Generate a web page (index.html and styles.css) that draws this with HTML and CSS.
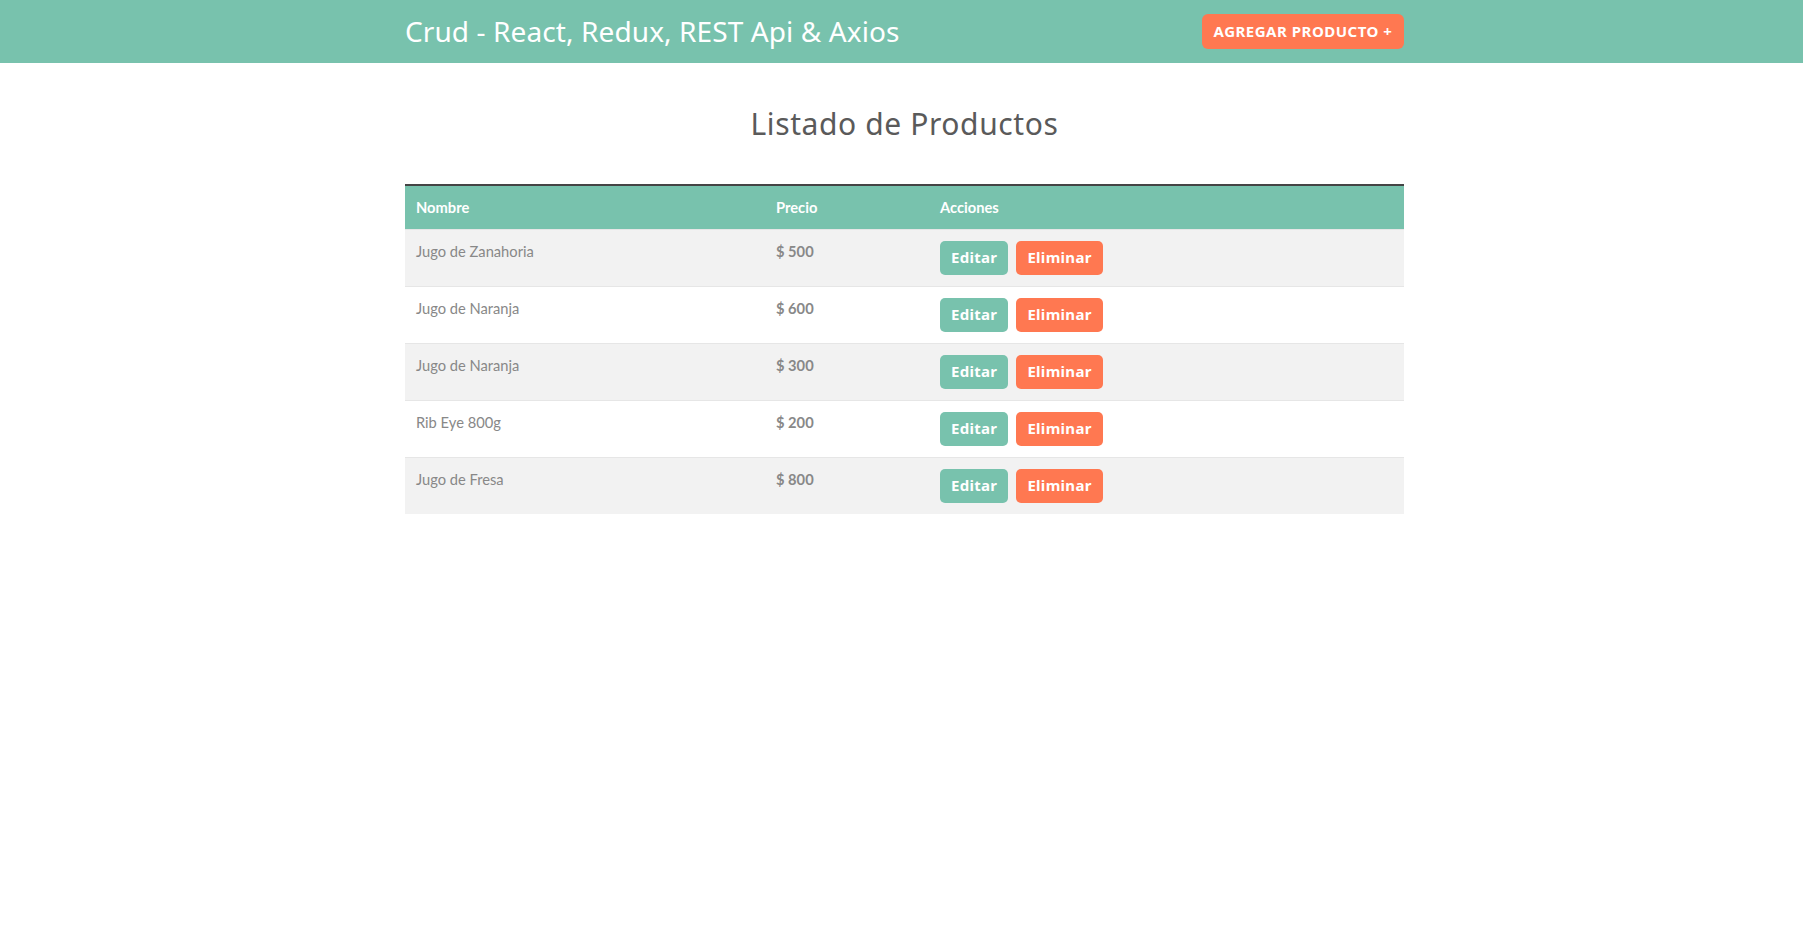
FILE: index.html
```html
<!DOCTYPE html>
<html lang="es">
<head>
<meta charset="utf-8">
<title>Crud - React, Redux, REST Api &amp; Axios</title>
<link rel="stylesheet" href="styles.css">
</head>
<body>
<header class="navbar">
  <div class="container navbar-inner">
    <h1 class="brand">Crud - React, Redux, REST Api &amp; Axios</h1>
    <a class="btn btn-danger btn-add" href="#">Agregar Producto +</a>
  </div>
</header>
<main class="container">
  <h2 class="page-title">Listado de Productos</h2>
  <table class="table">
    <colgroup>
      <col class="col-name">
      <col class="col-price">
      <col class="col-actions">
    </colgroup>
    <thead>
      <tr>
        <th>Nombre</th>
        <th>Precio</th>
        <th>Acciones</th>
      </tr>
    </thead>
    <tbody>
      <tr>
        <td>Jugo de Zanahoria</td>
        <td class="price">$ 500</td>
        <td><div class="actions"><a class="btn btn-primary" href="#">Editar</a><button class="btn btn-danger" type="button">Eliminar</button></div></td>
      </tr>
      <tr>
        <td>Jugo de Naranja</td>
        <td class="price">$ 600</td>
        <td><div class="actions"><a class="btn btn-primary" href="#">Editar</a><button class="btn btn-danger" type="button">Eliminar</button></div></td>
      </tr>
      <tr>
        <td>Jugo de Naranja</td>
        <td class="price">$ 300</td>
        <td><div class="actions"><a class="btn btn-primary" href="#">Editar</a><button class="btn btn-danger" type="button">Eliminar</button></div></td>
      </tr>
      <tr>
        <td>Rib Eye 800g</td>
        <td class="price">$ 200</td>
        <td><div class="actions"><a class="btn btn-primary" href="#">Editar</a><button class="btn btn-danger" type="button">Eliminar</button></div></td>
      </tr>
      <tr>
        <td>Jugo de Fresa</td>
        <td class="price">$ 800</td>
        <td><div class="actions"><a class="btn btn-primary" href="#">Editar</a><button class="btn btn-danger" type="button">Eliminar</button></div></td>
      </tr>
    </tbody>
  </table>
</main>
</body>
</html>
```

FILE: styles.css
```css
* { box-sizing: border-box; }

body {
  margin: 0;
  font-family: "Lato", "Open Sans", sans-serif;
  font-size: 14.7px;
  color: #888;
  background: #fff;
}

.container {
  width: 1005px;
  margin: 0 auto;
  padding-left: 6px;
}

.navbar {
  background: #78c2ad;
  height: 63px;
}

.navbar-inner {
  height: 63px;
  display: flex;
  align-items: center;
  justify-content: space-between;
}

.brand {
  margin: 0;
  font-family: "Noto Sans", sans-serif;
  font-weight: 400;
  font-size: 28px;
  letter-spacing: 0.1px;
  color: #fff;
  line-height: 1;
  padding-bottom: 2px;
}

.btn {
  display: inline-flex;
  align-items: center;
  justify-content: center;
  height: 34px;
  padding: 0 11px 2px;
  border: 0;
  border-radius: 5px;
  font-family: "Noto Sans", sans-serif;
  font-weight: 700;
  font-size: 15px;
  letter-spacing: 0.3px;
  color: #fff;
  text-decoration: none;
  cursor: pointer;
}

.btn-primary { background: #78c2ad; }
.btn-danger { background: #ff7851; }

.btn-add {
  height: 35px;
  width: 202px;
  padding: 0 0 1px;
  text-transform: uppercase;
  font-size: 15px;
  letter-spacing: 0.5px;
  border-radius: 6px;
}

.page-title {
  margin: 0;
  height: 121px;
  padding-top: 42px;
  text-align: center;
  font-family: "Noto Sans", sans-serif;
  font-weight: 400;
  font-size: 30px;
  letter-spacing: 0.6px;
  line-height: 38px;
  color: #5a5a5a;
}

.table {
  width: 999px;
  border-collapse: collapse;
  table-layout: fixed;
}

.col-name { width: 360px; }
.col-price { width: 164px; }

.table th {
  background: #78c2ad;
  color: #fff;
  font-weight: 700;
  font-size: 14.7px;
  text-align: left;
  padding: 12px 11px;
  line-height: 19px;
  border-top: 2px solid #444;
}

.table td {
  vertical-align: top;
  padding: 11px 11px;
  line-height: 21px;
  border-top: 1px solid #e6e6e6;
}

.table tbody tr:nth-child(odd) td { background: #f2f2f2; }

.price { font-weight: 700; }

.actions {
  display: flex;
  gap: 8px;
}
```
